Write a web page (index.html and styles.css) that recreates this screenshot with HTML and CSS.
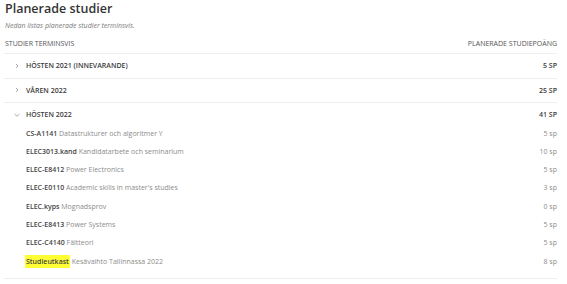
FILE: index.html
```html
<!DOCTYPE html>
<html>

<head>
    <title>Planerade studier</title>
    <link rel="stylesheet" href="styles.css">
</head>

<body>
    <div class="container">
        <h1>Planerade studier</h1>
        <p class="intro">Nedan listas planerade studier terminsvis.</p>

        <div class="table-head">
            <span>Studier terminsvis</span>
            <span>Planerade studiepoäng</span>
        </div>

        <!-- Terms -->
        <div class="term">
            <div class="term-row">
                <svg class="chevron" viewBox="0 0 6 6"><polyline points="2,1 4,3 2,5" /></svg>
                <span class="term-name">Hösten 2021 (innevarande)</span>
                <span class="term-credits">5 SP</span>
            </div>
        </div>

        <div class="term">
            <div class="term-row">
                <svg class="chevron" viewBox="0 0 6 6"><polyline points="2,1 4,3 2,5" /></svg>
                <span class="term-name">Våren 2022</span>
                <span class="term-credits">25 SP</span>
            </div>
        </div>

        <div class="term open">
            <div class="term-row">
                <svg class="chevron" viewBox="0 0 6 6"><polyline points="0.5,2 3,4.2 5.5,2" /></svg>
                <span class="term-name">Hösten 2022</span>
                <span class="term-credits">41 SP</span>
            </div>
            <ul class="courses">
                <li><span><b>CS-A1141</b> Datastrukturer och algoritmer Y</span><span>5 sp</span></li>
                <li><span><b>ELEC3013.kand</b> Kandidatarbete och seminarium</span><span>10 sp</span></li>
                <li><span><b>ELEC-E8412</b> Power Electronics</span><span>5 sp</span></li>
                <li><span><b>ELEC-E0110</b> Academic skills in master's studies</span><span>3 sp</span></li>
                <li><span><b>ELEC.kyps</b> Mognadsprov</span><span>0 sp</span></li>
                <li><span><b>ELEC-E8413</b> Power Systems</span><span>5 sp</span></li>
                <li><span><b>ELEC-C4140</b> Fältteori</span><span>5 sp</span></li>
                <li><span><b class="draft">Studieutkast</b> Kesävaihto Tallinnassa 2022</span><span>8 sp</span></li>
            </ul>
        </div>
    </div>
</body>

</html>
```

FILE: styles.css
```css
body {
    font-family: "Open Sans", sans-serif;
    margin: 0;
    padding: 0;
    background-color: #ffffff;
    color: #333333;
}

.container {
    padding: 0 10px 0 4px;
}

h1 {
    margin: 0;
    padding: 1px 0 0 1px;
    font-size: 12.5px;
    font-weight: 600;
    line-height: 16px;
    color: #333333;
}

.intro {
    margin: 4px 0 0 1px;
    font-size: 7px;
    font-style: italic;
    line-height: 9px;
    color: #7a7a7a;
}

/* Table Styles */
.table-head {
    display: flex;
    justify-content: space-between;
    padding: 9px 0 5px 1px;
    font-size: 7px;
    line-height: 9px;
    text-transform: uppercase;
    color: #555555;
    border-bottom: 1px solid #eeeeee;
}

.term {
    border-bottom: 1px solid #eeeeee;
}

.term-row {
    display: flex;
    align-items: center;
    height: 23.5px;
    font-size: 7px;
    font-weight: 600;
    text-transform: uppercase;
    color: #3c3c3c;
}

.chevron {
    width: 6px;
    height: 6px;
    margin: 0 6px 0 10px;
    fill: none;
    stroke: #888888;
    stroke-width: 0.7;
}

.term-name {
    flex: 1;
}

.courses {
    list-style: none;
    margin: -2px 0 0 0;
    padding: 0 0 7px 22px;
}

.courses li {
    display: flex;
    justify-content: space-between;
    height: 18.3px;
    line-height: 18.3px;
    font-size: 7px;
    color: #8c8c8c;
}

.courses b {
    font-weight: 600;
    color: #444444;
}

.draft {
    background-color: #ffff33;
    padding: 2px 1px;
    margin-left: -1px;
}
```
